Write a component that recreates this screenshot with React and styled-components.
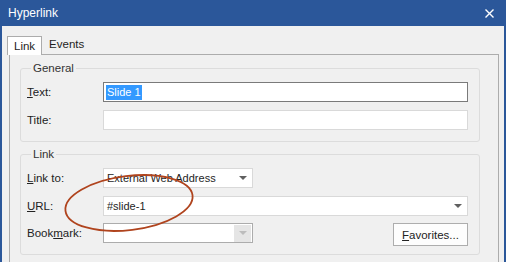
import React from "react";
import styled, {createGlobalStyle} from "styled-components";

const Global = createGlobalStyle`
    html, body {
        margin: 0;
        padding: 0;
        background: #f0f0f0;
    }
    body {
        font-family: "Liberation Sans", Arial, sans-serif;
        font-size: 11px;
        color: #1e1e1e;
    }
`;

const Window = styled.div`
    position: relative;
    width: 506px;
    height: 262px;
    box-sizing: border-box;
    border-left: 2px solid #2b579a;
    border-right: 2px solid #2b579a;
    background: #f0f0f0;
    overflow: hidden;
    display: flex;
    flex-direction: column;
`;

const TitleBar = styled.div`
    height: 26px;
    flex: none;
    margin: 0 -2px;
    padding: 0 12px 0 8px;
    background: #2b579a;
    color: #fff;
    display: flex;
    align-items: center;
    justify-content: space-between;
    font-size: 12px;
`;

const Body = styled.div`
    flex: 1;
    padding: 9px 5px 0 5px;
    display: flex;
    flex-direction: column;
`;

const TabStrip = styled.div`
    display: flex;
    align-items: flex-end;
    height: 19px;
    position: relative;
    z-index: 1;
`;

const Tab = styled.div`
    height: ${p => p.$active ? "19px" : "17px"};
    box-sizing: border-box;
    padding: 0 6px;
    display: flex;
    align-items: center;
    font-size: 11.5px;
    background: ${p => p.$active ? "#fff" : "transparent"};
    border: 1px solid ${p => p.$active ? "#acacac" : "transparent"};
    border-bottom: none;
    margin-bottom: ${p => p.$active ? "-1px" : "1px"};
    padding-bottom: ${p => p.$active ? "0" : "2px"};
`;

const Panel = styled.div`
    flex: 1;
    margin: 0 0 0 2px;
    border: 1px solid #acacac;
    border-bottom: none;
    background: #f0f0f0;
    padding: 6px 18px 0 10px;
    display: flex;
    flex-direction: column;
    gap: 5px;
`;

const Group = styled.fieldset`
    margin: 0;
    padding: 6px 11px 11px 6px;
    border: 1px solid #dcdcdc;
    border-radius: 3px;
    min-width: 0;
`;

const Legend = styled.legend`
    padding: 0 2px;
    margin-left: 4px;
    font-size: 11.5px;
    line-height: 14px;
    color: #333;
`;

const Row = styled.div`
    display: flex;
    align-items: flex-start;
    height: 20px;
    margin-top: ${p => p.$gap || 0}px;
`;

const Label = styled.div`
    width: 76px;
    height: 20px;
    line-height: 20px;
    flex: none;
    font-size: 11.5px;
    color: #222;

    u {
        text-decoration: underline;
        text-underline-offset: 1px;
    }
`;

const Input = styled.div`
    height: 20px;
    box-sizing: border-box;
    width: ${p => p.$width ? p.$width + "px" : "auto"};
    flex: ${p => p.$width ? "none" : "1"};
    background: #fff;
    border: 1px solid ${p => p.$focused ? "#7a7a7a" : p.$disabled ? "#acacac" : "#d9d9d9"};
    display: flex;
    align-items: center;
    padding-left: 2px;
    font-size: 11px;
    color: #1e1e1e;
`;

const Selected = styled.span`
    background: #3399ff;
    color: #fff;
    padding: 1px 1px;
    line-height: 13px;
`;

const ComboText = styled.span`
    flex: 1;
    padding-left: 1px;
`;

const ArrowBox = styled.div`
    width: 17px;
    height: 17px;
    margin-right: 1px;
    display: flex;
    align-items: center;
    justify-content: center;
    background: ${p => p.$disabled ? "#e5e5e5" : "transparent"};
    margin-left: auto;
`;

const Arrow = styled.span`
    width: 0;
    height: 0;
    border-left: 4px solid transparent;
    border-right: 4px solid transparent;
    border-top: 4px solid ${p => p.$disabled ? "#bcbcbc" : "#606060"};
`;

const Spacer = styled.div`
    flex: 1;
`;

const Button = styled.div`
    width: 75px;
    height: 23px;
    flex: none;
    box-sizing: border-box;
    border: 1px solid #adadad;
    background: #fdfdfd;
    display: flex;
    align-items: center;
    justify-content: center;
    font-size: 11.5px;
    color: #222;

    u {
        text-underline-offset: 1px;
    }
`;

const Ring = styled.svg`
    position: absolute;
    left: 55px;
    top: 166px;
    pointer-events: none;
`;

const Combo = ({text, width, disabled}) => (
    <Input $width={width} $disabled={disabled}>
        <ComboText>{text}</ComboText>
        <ArrowBox $disabled={disabled}>
            <Arrow $disabled={disabled}/>
        </ArrowBox>
    </Input>
);

const App = () => {
    return (
        <Window>
            <Global/>
            <TitleBar>
                <span>Hyperlink</span>
                <svg width="9" height="9" viewBox="0 0 9 9">
                    <path d="M0.5 0.5 L8.5 8.5 M8.5 0.5 L0.5 8.5" stroke="#fff" strokeWidth="1.4"/>
                </svg>
            </TitleBar>

            <Body>
                <TabStrip>
                    <Tab $active>Link</Tab>
                    <Tab>Events</Tab>
                </TabStrip>

                <Panel>
                    <Group>
                        <Legend>General</Legend>
                        <Row $gap={1}>
                            <Label><u>T</u>ext:</Label>
                            <Input $focused><Selected>Slide 1</Selected></Input>
                        </Row>
                        <Row $gap={8}>
                            <Label>Title:</Label>
                            <Input/>
                        </Row>
                    </Group>

                    <Group>
                        <Legend>Link</Legend>
                        <Row $gap={1}>
                            <Label><u>L</u>ink to:</Label>
                            <Combo text="External Web Address" width={150}/>
                        </Row>
                        <Row $gap={8}>
                            <Label><u>U</u>RL:</Label>
                            <Combo text="#slide-1"/>
                        </Row>
                        <Row $gap={7}>
                            <Label>Book<u>m</u>ark:</Label>
                            <Combo width={150} disabled/>
                            <Spacer/>
                            <Button><u>F</u>avorites...</Button>
                        </Row>
                    </Group>
                </Panel>
            </Body>

            <Ring width="144" height="76" viewBox="0 0 144 76">
                <ellipse cx="72" cy="37" rx="64" ry="27" fill="none" stroke="#b0441e" strokeWidth="1.8"
                         transform="rotate(-7 72 37)"/>
            </Ring>
        </Window>
    );
};

export default App;
